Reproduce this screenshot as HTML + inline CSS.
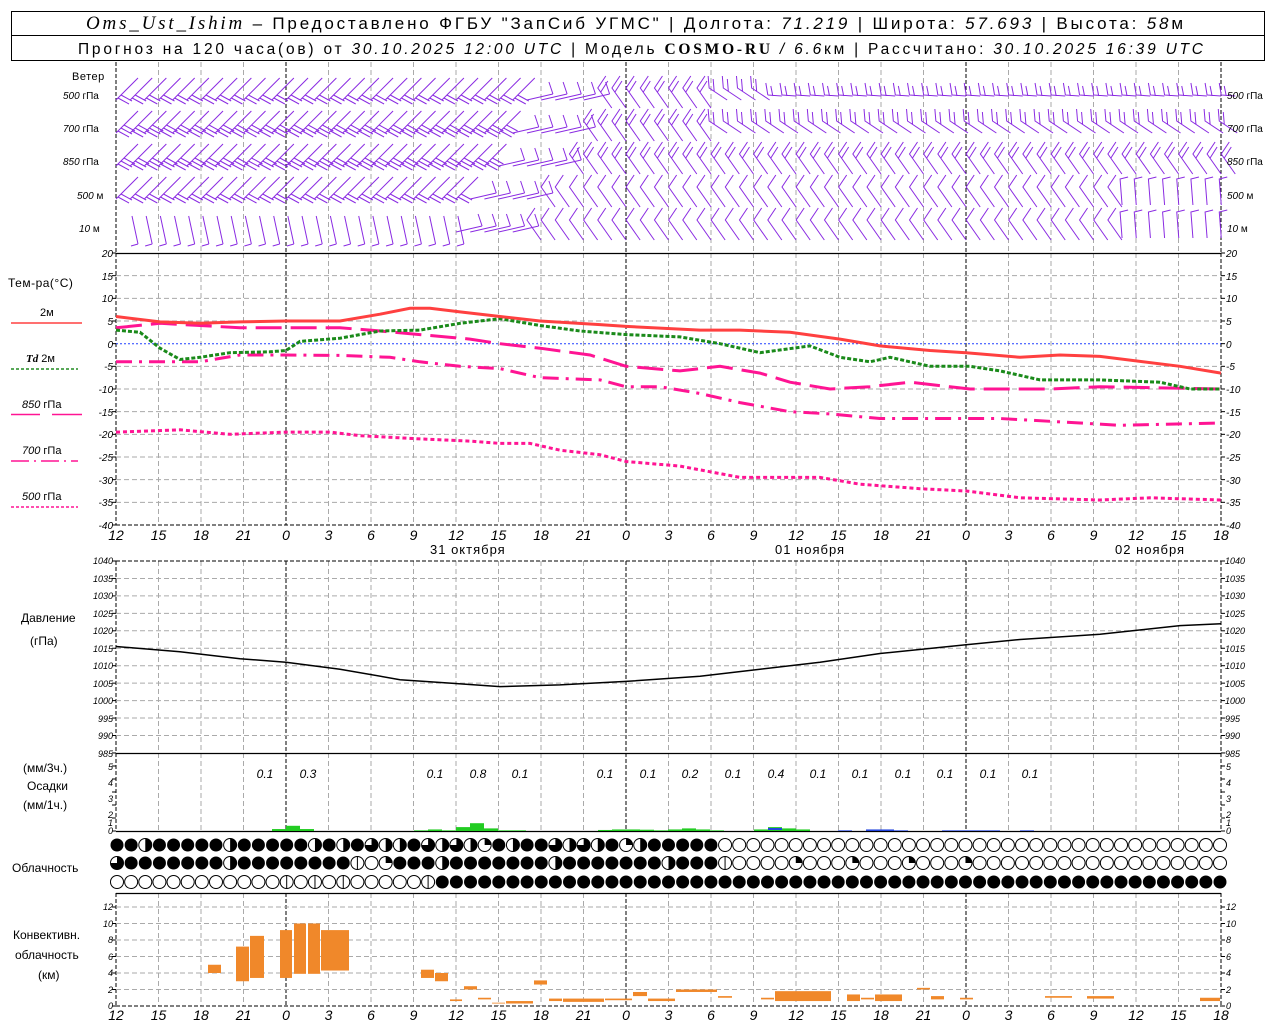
<!DOCTYPE html>
<html><head><meta charset="utf-8">
<style>
html,body{margin:0;padding:0;background:#fff;}
svg{display:block;font-family:"Liberation Sans",sans-serif;}
.t{font-size:13px;fill:#000;letter-spacing:0.5px}
.s{font-size:10px;font-style:italic;fill:#000}
.h{font-size:14px;font-style:italic;fill:#000}
.p{font-size:12px;font-style:italic;fill:#000}
</style></head><body>
<svg id="g" width="1280" height="1024" viewBox="0 0 1280 1024" xmlns="http://www.w3.org/2000/svg">
<rect x="0" y="0" width="1280" height="1024" fill="#fff"/>
<rect x="11.5" y="11.5" width="1253" height="49" fill="none" stroke="#000"/>
<line x1="11" y1="35.5" x2="1265" y2="35.5" stroke="#000"/>
<text y="29" x="86" textLength="1097" lengthAdjust="spacing" style="font-size:17px" fill="#000"><tspan font-family="Liberation Serif" font-style="italic" font-size="19">Oms_Ust_Ishim</tspan><tspan> – Предоставлено ФГБУ "ЗапСиб УГМС" | Долгота: </tspan><tspan font-style="italic">71.219</tspan><tspan> | Широта: </tspan><tspan font-style="italic">57.693</tspan><tspan> | Высота: </tspan><tspan font-style="italic">58</tspan><tspan>м</tspan></text>
<text y="54" x="78" textLength="1125" lengthAdjust="spacing" style="font-size:15.5px" fill="#000"><tspan>Прогноз на 120 часа(ов) от </tspan><tspan font-style="italic">30.10.2025 12:00 UTC</tspan><tspan>  | Модель </tspan><tspan font-family="Liberation Serif" font-weight="bold">COSMO-RU</tspan><tspan font-style="italic"> / 6.6</tspan><tspan>км | Рассчитано: </tspan><tspan font-style="italic">30.10.2025 16:39 UTC</tspan></text>
<g id="grid"></g>
<g id="data"></g>
<text class="t" x="72" y="80" style="font-size:11px">Ветер</text>
<g style="font-size:10px" fill="#000">
<text x="63" y="99"><tspan font-style="italic">500</tspan> гПа</text>
<text x="63" y="132"><tspan font-style="italic">700</tspan> гПа</text>
<text x="63" y="165"><tspan font-style="italic">850</tspan> гПа</text>
<text x="77" y="199"><tspan font-style="italic">500</tspan> м</text>
<text x="79" y="232"><tspan font-style="italic">10</tspan>   м</text>
<text x="1227" y="99"><tspan font-style="italic">500</tspan> гПа</text>
<text x="1227" y="132"><tspan font-style="italic">700</tspan> гПа</text>
<text x="1227" y="165"><tspan font-style="italic">850</tspan> гПа</text>
<text x="1227" y="199"><tspan font-style="italic">500</tspan> м</text>
<text x="1227" y="232"><tspan font-style="italic">10</tspan>   м</text>
</g>
<text class="t" x="8" y="287" style="font-size:12px">Тем-ра(°С)</text>
<text x="40" y="316" style="font-size:11px">2м</text>
<line x1="11" y1="323" x2="82" y2="323" stroke="#ff4040" stroke-width="1.5"/>
<text x="26" y="362" style="font-size:11px"><tspan font-style="italic" font-weight="bold" font-family="Liberation Serif">Td</tspan>  2м</text>
<line x1="11" y1="369" x2="78" y2="369" stroke="#228b22" stroke-width="1.5" stroke-dasharray="3,2"/>
<text x="22" y="408" style="font-size:11px"><tspan font-style="italic">850</tspan> гПа</text>
<line x1="11" y1="414.5" x2="40" y2="414.5" stroke="#ff1493" stroke-width="1.5"/><line x1="52" y1="414.5" x2="82" y2="414.5" stroke="#ff1493" stroke-width="1.5"/>
<text x="22" y="454" style="font-size:11px"><tspan font-style="italic">700</tspan> гПа</text>
<line x1="11" y1="461" x2="78" y2="461" stroke="#ff1493" stroke-width="1.5" stroke-dasharray="18,5,2,5"/>
<text x="22" y="500" style="font-size:11px"><tspan font-style="italic">500</tspan> гПа</text>
<line x1="11" y1="507" x2="78" y2="507" stroke="#ff1493" stroke-width="1.5" stroke-dasharray="3,2"/>
<g class="s" text-anchor="end">
<text x="113" y="257">20</text><text x="113" y="280">15</text><text x="113" y="302">10</text><text x="113" y="325">5</text><text x="113" y="348">0</text><text x="113" y="370">-5</text><text x="113" y="393">-10</text><text x="113" y="416">-15</text><text x="113" y="438">-20</text><text x="113" y="461">-25</text><text x="113" y="484">-30</text><text x="113" y="506">-35</text><text x="113" y="529">-40</text>
</g>
<g class="s">
<text x="1226" y="257">20</text><text x="1226" y="280">15</text><text x="1226" y="302">10</text><text x="1226" y="325">5</text><text x="1226" y="348">0</text><text x="1226" y="370">-5</text><text x="1226" y="393">-10</text><text x="1226" y="416">-15</text><text x="1226" y="438">-20</text><text x="1226" y="461">-25</text><text x="1226" y="484">-30</text><text x="1226" y="506">-35</text><text x="1226" y="529">-40</text>
</g>
<text class="h" y="540" text-anchor="middle"><tspan x="116">12</tspan><tspan x="158.5">15</tspan><tspan x="201">18</tspan><tspan x="243.5">21</tspan><tspan x="286">0</tspan><tspan x="328.5">3</tspan><tspan x="371">6</tspan><tspan x="413.5">9</tspan><tspan x="456">12</tspan><tspan x="498.5">15</tspan><tspan x="541">18</tspan><tspan x="583.5">21</tspan><tspan x="626">0</tspan><tspan x="668.5">3</tspan><tspan x="711">6</tspan><tspan x="753.5">9</tspan><tspan x="796">12</tspan><tspan x="838.5">15</tspan><tspan x="881">18</tspan><tspan x="923.5">21</tspan><tspan x="966">0</tspan><tspan x="1008.5">3</tspan><tspan x="1051">6</tspan><tspan x="1093.5">9</tspan><tspan x="1136">12</tspan><tspan x="1178.5">15</tspan><tspan x="1221">18</tspan></text>
<g style="font-size:13px;letter-spacing:1px" fill="#000">
<text x="430" y="554">31 октября</text><text x="775" y="554">01 ноября</text><text x="1115" y="554">02 ноября</text>
</g>
<text x="21" y="622" style="font-size:12px">Давление</text>
<text x="30" y="645" style="font-size:12px">(гПа)</text>
<g class="s" text-anchor="end" style="font-size:9px">
<text x="113" y="564">1040</text><text x="113" y="582">1035</text><text x="113" y="599">1030</text><text x="113" y="617">1025</text><text x="113" y="634">1020</text><text x="113" y="652">1015</text><text x="113" y="669">1010</text><text x="113" y="687">1005</text><text x="113" y="704">1000</text><text x="113" y="722">995</text><text x="113" y="739">990</text><text x="113" y="757">985</text>
</g>
<g class="s" style="font-size:9px">
<text x="1225" y="564">1040</text><text x="1225" y="582">1035</text><text x="1225" y="599">1030</text><text x="1225" y="617">1025</text><text x="1225" y="634">1020</text><text x="1225" y="652">1015</text><text x="1225" y="669">1010</text><text x="1225" y="687">1005</text><text x="1225" y="704">1000</text><text x="1225" y="722">995</text><text x="1225" y="739">990</text><text x="1225" y="757">985</text>
</g>
<text x="23" y="772" style="font-size:12px">(мм/3ч.)</text>
<text x="27" y="790" style="font-size:12px">Осадки</text>
<text x="23" y="809" style="font-size:12px">(мм/1ч.)</text>
<g class="s" text-anchor="end" style="font-size:9px">
<text x="113" y="770">5</text><text x="113" y="786">4</text><text x="113" y="802">3</text><text x="113" y="818">2</text><text x="113" y="834">0</text><text x="113" y="826">1</text>
</g>
<g class="s" style="font-size:9px">
<text x="1226" y="770">5</text><text x="1226" y="786">4</text><text x="1226" y="802">3</text><text x="1226" y="818">2</text><text x="1226" y="826">1</text><text x="1226" y="834">0</text>
</g>
<g class="p" text-anchor="middle">
<text x="265" y="778">0.1</text><text x="308" y="778">0.3</text><text x="435" y="778">0.1</text><text x="478" y="778">0.8</text><text x="520" y="778">0.1</text><text x="605" y="778">0.1</text><text x="648" y="778">0.1</text><text x="690" y="778">0.2</text><text x="733" y="778">0.1</text><text x="776" y="778">0.4</text><text x="818" y="778">0.1</text><text x="860" y="778">0.1</text><text x="903" y="778">0.1</text><text x="945" y="778">0.1</text><text x="988" y="778">0.1</text><text x="1030" y="778">0.1</text>
</g>
<text x="12" y="872" style="font-size:12px">Облачность</text>
<text x="13" y="939" style="font-size:12px">Конвективн.</text>
<text x="15" y="959" style="font-size:12px">облачность</text>
<text x="38" y="979" style="font-size:12px">(км)</text>
<g class="s" text-anchor="end" style="font-size:9px">
<text x="113" y="910">12</text><text x="113" y="927">10</text><text x="113" y="943">8</text><text x="113" y="960">6</text><text x="113" y="976">4</text><text x="113" y="993">2</text><text x="113" y="1009">0</text>
</g>
<g class="s" style="font-size:9px">
<text x="1226" y="910">12</text><text x="1226" y="927">10</text><text x="1226" y="943">8</text><text x="1226" y="960">6</text><text x="1226" y="976">4</text><text x="1226" y="993">2</text><text x="1226" y="1009">0</text>
</g>
<text class="h" y="1020" text-anchor="middle"><tspan x="116">12</tspan><tspan x="158.5">15</tspan><tspan x="201">18</tspan><tspan x="243.5">21</tspan><tspan x="286">0</tspan><tspan x="328.5">3</tspan><tspan x="371">6</tspan><tspan x="413.5">9</tspan><tspan x="456">12</tspan><tspan x="498.5">15</tspan><tspan x="541">18</tspan><tspan x="583.5">21</tspan><tspan x="626">0</tspan><tspan x="668.5">3</tspan><tspan x="711">6</tspan><tspan x="753.5">9</tspan><tspan x="796">12</tspan><tspan x="838.5">15</tspan><tspan x="881">18</tspan><tspan x="923.5">21</tspan><tspan x="966">0</tspan><tspan x="1008.5">3</tspan><tspan x="1051">6</tspan><tspan x="1093.5">9</tspan><tspan x="1136">12</tspan><tspan x="1178.5">15</tspan><tspan x="1221">18</tspan></text>
</svg>
<script>
(function(){
var NS="http://www.w3.org/2000/svg";
var grid=document.getElementById('grid'),data=document.getElementById('data');
function el(p,t,a){var e=document.createElementNS(NS,t);for(var k in a)e.setAttribute(k,a[k]);p.appendChild(e);return e;}
function L(p,x1,y1,x2,y2,s,w,d){var a={x1:x1,y1:y1,x2:x2,y2:y2,stroke:s,'stroke-width':w||1};if(d)a['stroke-dasharray']=d;return el(p,'line',a);}
var X0=116,X1=1221;
var panels=[[62,253],[253,525],[561,753],[753,831],[893,1006]];
panels.forEach(function(pn){
 for(var k=0;k<=26;k++){var x=X0+42.5*k;
  if(k==4||k==12||k==20)L(grid,x,pn[0],x,pn[1],'#000',1,'4,2');
  else if(k>0&&k<26)L(grid,x,pn[0],x,pn[1],'#aaa',1,'5,3');}
 L(grid,X0,pn[0],X0,pn[1],'#000',1,'4,2');L(grid,X1,pn[0],X1,pn[1],'#000',1,'4,2');
});
for(var v=15;v>=-35;v-=5){var y=253+(20-v)*4.533;if(v!=0)L(grid,X0,y,X1,y,'#aaa',1,'5,3');}
L(grid,X0,343.7,X1,343.7,'#2040ff',1,'2,2');
for(var p=1035;p>=990;p-=5){var y=561+(1040-p)*3.49;L(grid,X0,y,X1,y,'#aaa',1,'5,3');}
for(var c=2;c<=12;c+=2){var y=1006-c*8.25;L(grid,X0,y,X1,y,'#aaa',1,'5,3');}
L(grid,X0,253.5,X1,253.5,'#000',1.3);L(grid,X0,525,X1,525,'#000',1,'4,2');
L(grid,X0,561,X1,561,'#000',1,'4,2');L(grid,X0,753.5,X1,753.5,'#000',1.3);
L(grid,X0,831.5,X1,831.5,'#000',1.3);L(grid,X0,893.5,X1,893.5,'#000',1.3);L(grid,X0,1006,X1,1006,'#000',1,'4,2');
function ticks(x,ys,dir){ys.forEach(function(y){L(grid,x,y,x+dir*4,y,'#000',1);});}
var ty=[];for(var v=20;v>=-40;v-=5)ty.push(253+(20-v)*4.533);ticks(X0,ty,-1);ticks(X1,ty,1);
var py=[];for(var p=1040;p>=985;p-=5)py.push(561+(1040-p)*3.49);ticks(X0,py,-1);ticks(X1,py,1);
var ry=[];for(var r=0;r<=5;r++)ry.push(831-r*13);ticks(X0,ry,-1);ticks(X1,ry,1);
var cy=[];for(var c=0;c<=12;c+=2)cy.push(1006-c*8.25);ticks(X0,cy,-1);ticks(X1,cy,1);
function curve(pts,f,col,w,d){var s=pts.map(function(q){return q[0]+','+f(q[1]).toFixed(1)}).join(' ');var a={points:s,fill:'none',stroke:col,'stroke-width':w};if(d)a['stroke-dasharray']=d;el(data,'polyline',a);}
var TY=function(v){return 253+(20-v)*4.533;};
curve([[116,-19.5],[180,-19],[230,-20],[286,-19.5],[330,-19.5],[360,-20.3],[420,-21],[470,-21.5],[500,-22],[530,-22],[560,-23.5],[600,-24.5],[626,-26],[680,-27],[740,-29.5],[820,-29.5],[860,-31],[920,-32],[966,-32.5],[1020,-34],[1100,-34.5],[1150,-34],[1221,-34.5]],TY,'#ff1493',3,'4,3');
curve([[116,-4],[200,-4],[240,-2.5],[286,-2.5],[340,-2.6],[390,-3],[420,-4],[460,-5],[500,-5.5],[540,-7.5],[600,-8],[626,-9.5],[660,-9.5],[700,-11],[740,-13],[790,-15],[830,-15.5],[880,-16.5],[930,-16.5],[1000,-16.5],[1080,-17.5],[1120,-18],[1221,-17.5]],TY,'#ff1493',3,'16,7,3,7');
curve([[116,3.5],[160,4.5],[200,4],[240,3.5],[286,3.5],[340,3.5],[370,3],[420,2],[470,1],[500,0],[540,-1],[590,-2.5],[626,-5],[680,-6],[720,-5],[760,-6.5],[790,-8.5],[830,-10],[870,-9.5],[910,-8.5],[970,-10],[1050,-10],[1100,-9.5],[1221,-10]],TY,'#ff1493',3,'26,9');
curve([[116,3],[140,2.5],[160,-1],[180,-3.5],[200,-3],[230,-2],[270,-1.8],[286,-1.5],[300,0.5],[340,1.2],[380,2.8],[420,3],[460,4.5],[500,5.5],[540,4],[580,2.8],[626,2],[680,1.5],[720,0],[760,-2],[810,-0.5],[840,-3],[870,-4],[890,-3],[930,-5],[970,-5],[1000,-6],[1040,-8],[1100,-8],[1160,-8.5],[1190,-10],[1221,-10]],TY,'#1a8a1a',3,'4,2');
curve([[116,6],[160,4.8],[200,4.5],[240,4.8],[286,5],[340,5],[380,6.5],[410,7.8],[430,7.8],[460,7],[500,6],[540,5],[600,4.2],[626,3.8],[700,3],[740,3],[790,2.5],[840,1],[880,-0.5],[930,-1.5],[966,-2],[1020,-3],[1060,-2.5],[1100,-2.8],[1180,-5],[1221,-6.5]],TY,'#ff4040',3);
curve([[116,1015.5],[180,1014],[240,1012],[286,1011],[340,1009],[400,1006],[450,1005],[500,1004],[560,1004.5],[626,1005.5],[700,1007],[760,1009],[820,1011],[880,1013.5],[966,1016],[1020,1017.5],[1100,1019],[1180,1021.5],[1221,1022]],function(p){return 561+(1040-p)*3.49},'#000',1.5);
var pr=[[272,286,0.15,'#22cc22'],[286,300,0.4,'#22cc22'],[300,314,0.15,'#22cc22'],[414,428,0.05,'#22cc22'],[428,442,0.12,'#22cc22'],[442,456,0.05,'#22cc22'],[456,470,0.3,'#22cc22'],[470,484,0.6,'#22cc22'],[484,498,0.2,'#22cc22'],[498,512,0.05,'#22cc22'],[512,526,0.05,'#22cc22'],[598,612,0.08,'#22cc22'],[612,626,0.12,'#22cc22'],[626,640,0.12,'#22cc22'],[640,654,0.1,'#22cc22'],[654,668,0.05,'#22cc22'],[668,682,0.12,'#22cc22'],[682,696,0.2,'#22cc22'],[696,710,0.12,'#22cc22'],[710,724,0.05,'#22cc22'],[754,768,0.12,'#22cc22'],[768,782,0.3,'#22cc22'],[782,796,0.2,'#22cc22'],[796,810,0.12,'#22cc22'],[838,852,0.05,'#2244dd'],[866,894,0.12,'#2244dd'],[894,908,0.05,'#2244dd'],[942,1000,0.05,'#2244dd'],[1020,1034,0.05,'#2244dd']];
pr.forEach(function(b){el(data,'rect',{x:b[0],y:831-b[2]*13,width:b[1]-b[0],height:b[2]*13,fill:b[3]});});
el(data,'rect',{x:768,y:828,width:14,height:2,fill:'#2244dd'});
var cb=[[208,222,4,5],[236,250,3,7.2],[250,265,3.4,8.5],[280,293,3.4,9.2],[294,307,3.9,10],[308,321,3.9,10],[321,350,4.3,9.2],[421,435,3.4,4.4],[435,449,3,4],[450,463,0.6,0.8],[464,478,2,2.4],[478,492,0.8,1],[492,506,0.3,0.4],[506,534,0.3,0.6],[534,548,2.6,3.1],[549,563,0.6,0.9],[563,605,0.5,0.9],[605,633,0.7,0.9],[633,648,1.2,1.7],[648,676,0.6,0.9],[676,718,1.7,2],[718,733,1,1.2],[761,775,0.8,1],[775,832,0.6,1.8],[847,861,0.6,1.4],[861,875,0.8,1],[875,903,0.6,1.4],[917,931,2,2.2],[931,945,0.8,1.2],[960,974,0.8,1],[1045,1073,1,1.2],[1087,1115,0.9,1.2],[1200,1221,0.6,1]];
cb.forEach(function(b){el(data,'rect',{x:b[0],y:1006-b[3]*8.25,width:b[1]-b[0]-1,height:(b[3]-b[2])*8.25,fill:'#f0882a'});});
var n=79,sp=(X1-X0-2)/(n-1);
function circ(cx,cy,kind){var r=6.5;
 if(kind==1){el(data,'circle',{cx:cx,cy:cy,r:r,fill:'#000'});return;}
 el(data,'circle',{cx:cx,cy:cy,r:r,fill:'#fff',stroke:'#000','stroke-width':1});
 if(kind==2){el(data,'path',{d:'M'+cx+','+(cy-r)+' A'+r+','+r+' 0 0 1 '+cx+','+(cy+r)+'Z',fill:'#000'});}
 if(kind==3){el(data,'path',{d:'M'+cx+','+cy+' L'+cx+','+(cy-r)+' A'+r+','+r+' 0 1 1 '+(cx-r)+','+cy+'Z',fill:'#000'});}
 if(kind==4){L(data,cx,cy-r,cx,cy+r,'#000',1);}
 if(kind==5){el(data,'path',{d:'M'+cx+','+cy+' L'+cx+','+(cy-r)+' A'+r+','+r+' 0 0 1 '+(cx+r)+','+cy+'Z',fill:'#000'});}
}
function pad(s){while(s.length<n)s+='0';return s.slice(0,n);}
var r1=pad('1121111121111121213221323251211323215211111');
var r2=pad('31111111211111111405111211111112111111121114'+'000050005000500050');
for(var i=0;i<n;i++){var cx=X0+1+i*sp;
 circ(cx,845,r1.charCodeAt(i)-48);circ(cx,863,r2.charCodeAt(i)-48);
 circ(cx,882,i<22?(i>=12&&i<=17&&i%2==0?4:0):(i==22?4:1));}
var col='#8a2be2';var rows=[96,129,162,195,228];
function pth(d){el(data,'path',{d:d,fill:'none',stroke:col,'stroke-width':1});}
for(var ri=0;ri<5;ri++){var y=rows[ri];
 var trans=[520,500,490,470,455][ri];
 for(var i=0;i<n;i++){var x=X0+i*14.17;var d='';
  if(x<trans){
   if(ri==4){d='M'+(x+22)+','+(y+16)+' L'+(x+16)+','+(y-12)+' M'+(x+22)+','+(y+16)+' l-7,2';}
   else{var nf=(ri==1||ri==2)?3:2;d='M'+x+','+(y+4)+' L'+(x+22)+','+(y-18);
    for(var f=0;f<nf;f++){var bx=x+2+f*3,by=y+2-f*3;d+=' M'+bx+','+by+' l11,6';}}
  } else if(x<trans+70){
   d='M'+(x)+','+(y+4)+' L'+(x+26)+','+(y-2)+' M'+(x+26)+','+(y-2)+' l-4,-12';
  } else {
   if(ri==0&&x>760){d='M'+x+','+(y-1)+' L'+(x+14)+','+(y)+' M'+x+','+(y-1)+' l-2,-12 M'+(x+5)+','+y+' l-2,-10';}
   else if(ri<=1&&x>700){d='M'+(x+16)+','+(y+4)+' L'+(x-2)+','+(y-8)+' L'+(x-3)+','+(y-20)+' M'+(x+3)+','+(y-5)+' l-1,-12';}
   else if(ri>=3&&x>1120){d='M'+(x)+','+(y+10)+' L'+(x-2)+','+(y-16)+' l8,-2';}
   else{d='M'+(x+14)+','+(y+12)+' L'+(x)+','+(y-8)+' L'+(x+8)+','+(y-20)+(ri<3?' M'+(x+3)+','+(y-4)+' l7,-11':'');}
  }
  pth(d);}
}
})();
</script>
</body></html>
